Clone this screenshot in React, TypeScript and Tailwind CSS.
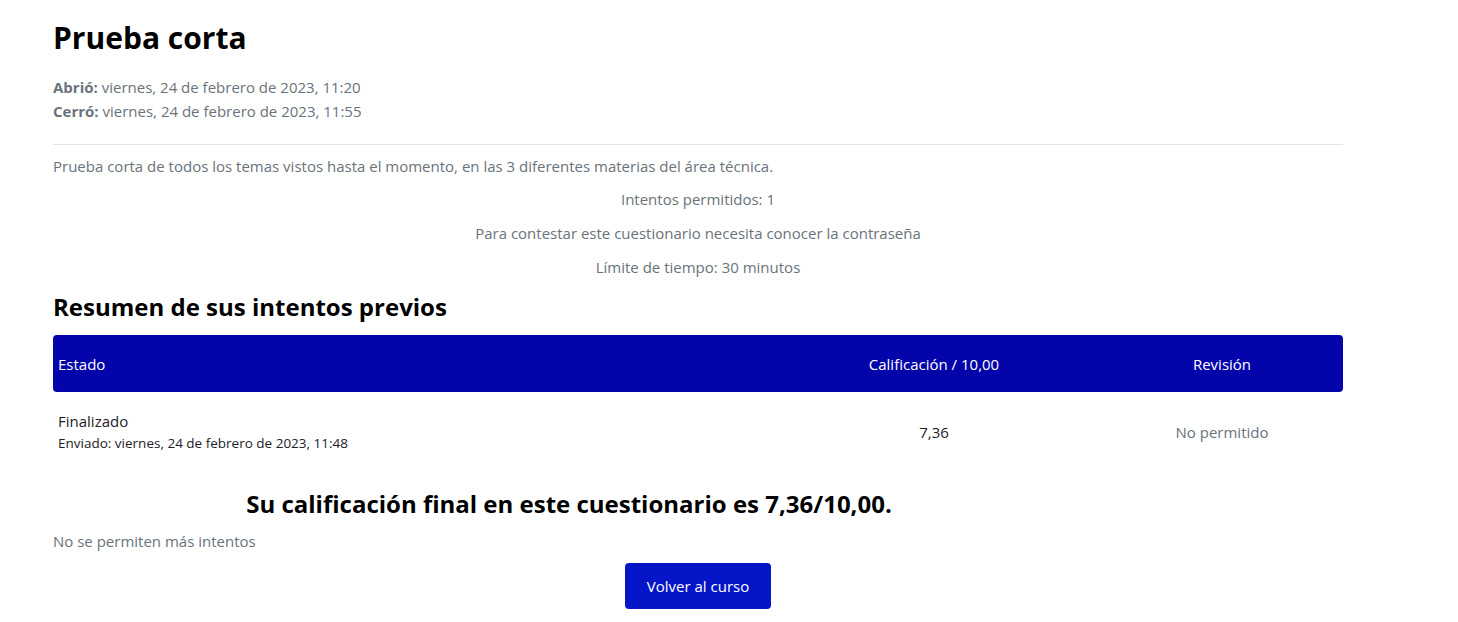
import React from "react";

export default function App() {
  return (
    <div className="w-[1458px] h-[622px] bg-white font-['Open_Sans',sans-serif] overflow-hidden">
      <div className="ml-[53px] w-[1290px] pt-[18px]">
        <h1 className="text-[30px] font-bold text-[#000] leading-[40px]">Prueba corta</h1>
        <div className="mt-[17px] text-[15px] leading-[24px] text-[#6a737b]">
          <p>
            <span className="font-bold">Abrió:</span> viernes, 24 de febrero de 2023, 11:20
          </p>
          <p>
            <span className="font-bold">Cerró:</span> viernes, 24 de febrero de 2023, 11:55
          </p>
        </div>
        <div className="mt-[21px] h-px bg-[#dee2e6]"></div>
        <p className="mt-[9px] text-[15px] leading-[24px] text-[#6a737b]">
          Prueba corta de todos los temas vistos hasta el momento, en las 3 diferentes materias del área técnica.
        </p>
        <div className="mt-[9px] flex flex-col gap-[10px] text-center text-[15px] leading-[24px] text-[#6a737b]">
          <p>Intentos permitidos: 1</p>
          <p>Para contestar este cuestionario necesita conocer la contraseña</p>
          <p>Límite de tiempo: 30 minutos</p>
        </div>
        <h2 className="mt-[12px] text-[24px] font-bold leading-[32px] text-[#000]">
          Resumen de sus intentos previos
        </h2>
        <div className="mt-[12px]">
          <div className="grid grid-cols-[714px_334px_242px] h-[57px] items-center rounded-[4px] bg-[#0404ab] text-[15px] text-white">
            <div className="pl-[5px] pt-[1px]">Estado</div>
            <div className="text-center pt-[1px]">Calificación / 10,00</div>
            <div className="text-center pt-[1px]">Revisión</div>
          </div>
          <div className="grid grid-cols-[714px_334px_242px] h-[80px] items-center text-[15px] text-[#1d2125]">
            <div className="pl-[5px]">
              <p className="leading-[22px]">Finalizado</p>
              <p className="text-[13.5px] leading-[22px]">Enviado: viernes, 24 de febrero de 2023, 11:48</p>
            </div>
            <div className="text-center">7,36</div>
            <div className="text-center text-[#6a737b]">No permitido</div>
          </div>
        </div>
        <h3 className="mt-[16px] w-[1032px] text-center text-[24px] font-bold leading-[32px] text-[#000]">
          Su calificación final en este cuestionario es 7,36/10,00.
        </h3>
        <p className="mt-[9px] text-[15px] leading-[24px] text-[#6a737b]">No se permiten más intentos</p>
        <div className="mt-[10px] flex justify-center">
          <button className="h-[46px] w-[146px] rounded-[4px] bg-[#0516c8] text-[15px] text-white">
            Volver al curso
          </button>
        </div>
      </div>
    </div>
  );
}
